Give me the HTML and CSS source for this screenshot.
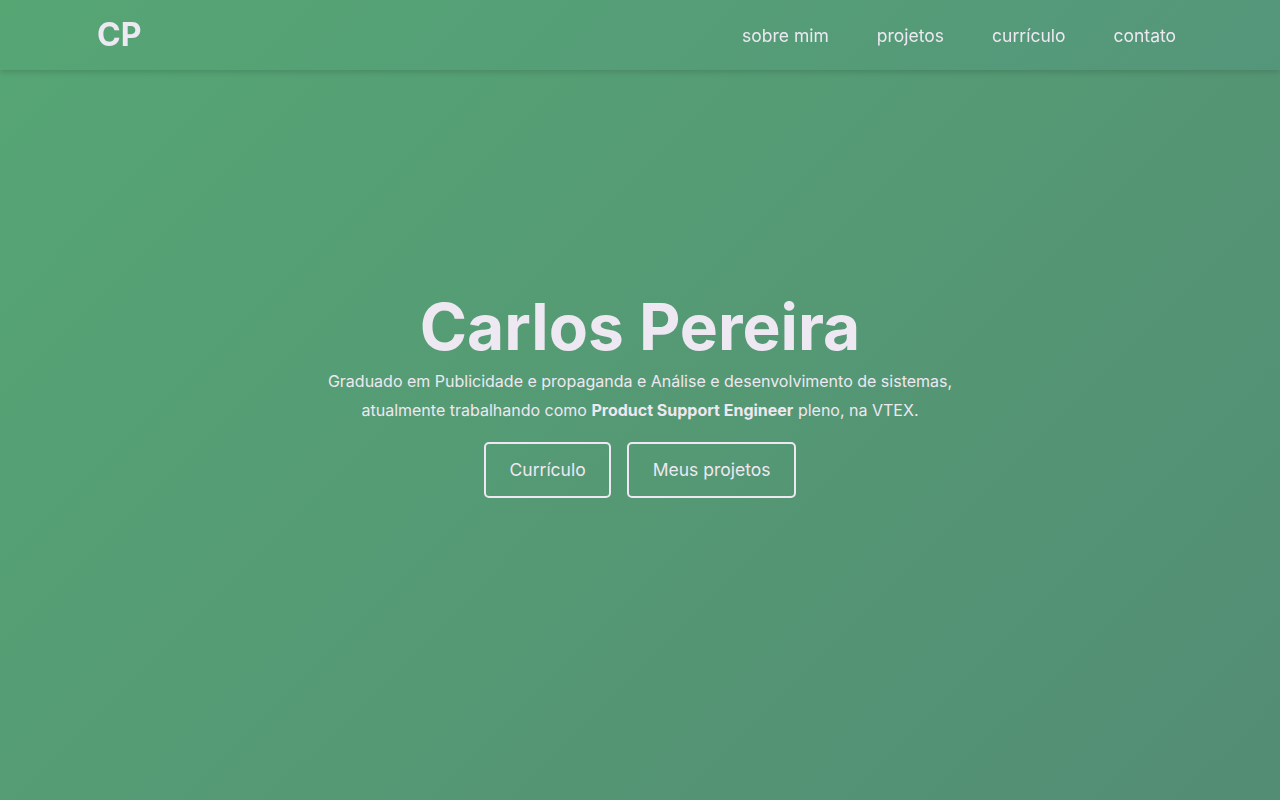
FILE: index.html
```html
<!DOCTYPE html>
<html lang="pt-BR">
<head>
<meta charset="utf-8">
<title>Carlos Pereira</title>
<link rel="stylesheet" href="styles.css">
</head>
<body>
<header class="header">
  <div class="header-inner">
    <a class="logo" href="#">CP</a>
    <nav class="nav">
      <a href="#">sobre mim</a>
      <a href="#">projetos</a>
      <a href="#">currículo</a>
      <a href="#">contato</a>
    </nav>
  </div>
</header>
<main class="hero">
  <div class="hero-content">
    <h1 class="title">Carlos Pereira</h1>
    <p class="desc">Graduado em Publicidade e propaganda e Análise e desenvolvimento de sistemas,<br>atualmente trabalhando como <strong>Product Support Engineer</strong> pleno, na VTEX.</p>
    <div class="actions">
      <a class="btn" href="#">Currículo</a>
      <a class="btn" href="#">Meus projetos</a>
    </div>
  </div>
</main>
</body>
</html>
```

FILE: styles.css
```css
* { box-sizing: border-box; }
html, body { margin: 0; padding: 0; }
body {
  font-family: Inter, "Noto Sans", sans-serif;
  color: #eee8f2;
  background: linear-gradient(135deg, #56a674 0%, #538d74 100%);
  min-height: 100vh;
}
a { color: inherit; text-decoration: none; }
.header {
  position: fixed;
  top: 0; left: 0; right: 0;
  height: 70px;
  background: linear-gradient(135deg, #56a674 0%, #54967a 100%);
  box-shadow: 0 2px 6px rgba(0,0,0,0.15);
  z-index: 10;
}
.header-inner {
  height: 100%;
  width: 1090px;
  margin: 0 auto;
  padding: 0 9px 0 2px;
  display: flex;
  align-items: center;
  justify-content: space-between;
}
.logo {
  font-size: 32px;
  font-weight: 700;
  line-height: 1;
}
.nav {
  display: flex;
  gap: 48px;
}
.nav a {
  font-size: 17.5px;
  font-weight: 400;
}
.hero {
  height: 100vh;
  display: flex;
  align-items: center;
  justify-content: center;
  text-align: center;
  padding-bottom: 10px;
}
.hero-content {
  display: flex;
  flex-direction: column;
  align-items: center;
}
.title {
  margin: 0 0 4px;
  font-size: 64px;
  font-weight: 700;
  line-height: 1.1;
}
.desc {
  margin: 0;
  font-size: 16px;
  line-height: 29px;
}
.desc strong { font-weight: 700; }
.actions {
  display: flex;
  gap: 16px;
  margin-top: 17px;
}
.btn {
  display: inline-flex;
  align-items: center;
  justify-content: center;
  height: 56px;
  padding: 0 23.5px;
  border: 2px solid #eee8f2;
  border-radius: 5px;
  font-size: 17.5px;
}
```
